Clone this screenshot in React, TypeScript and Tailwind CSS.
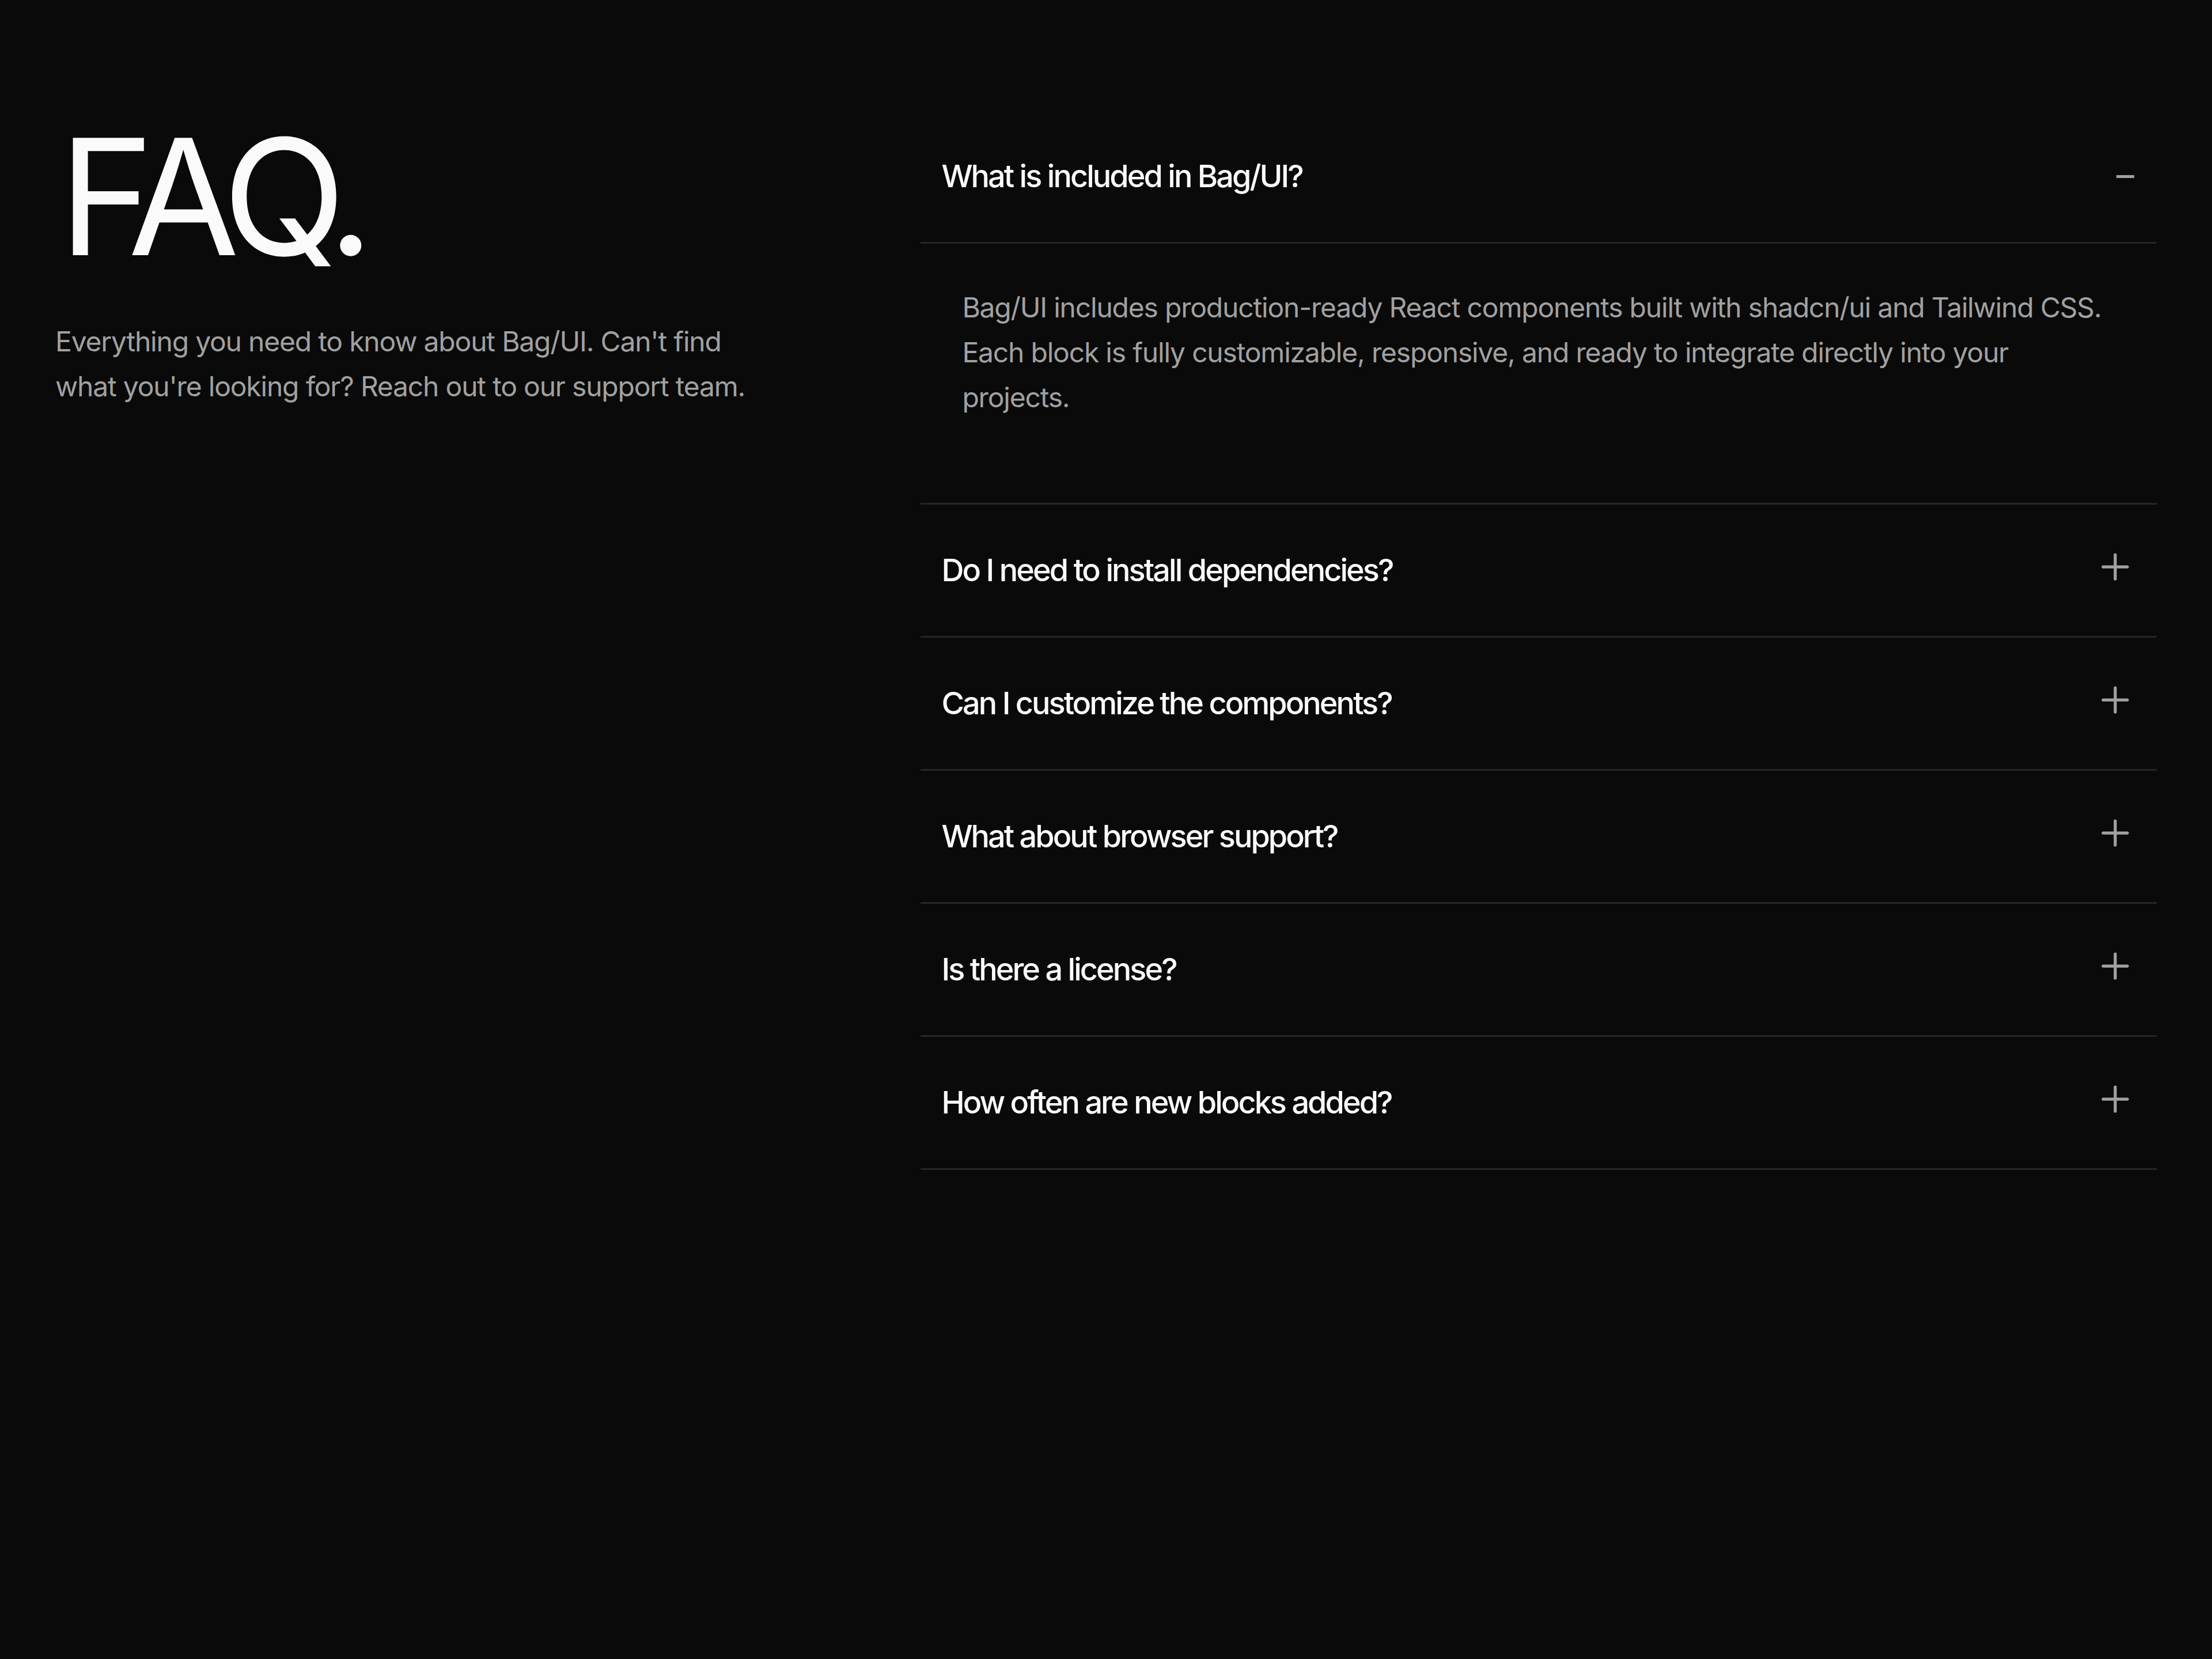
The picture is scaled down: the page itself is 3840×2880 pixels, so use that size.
import { useState } from "react";
import { Plus } from "lucide-react";

const faqs = [
  {
    q: "What is included in Bag/UI?",
    a: "Bag/UI includes production-ready React components built with shadcn/ui and Tailwind CSS. Each block is fully customizable, responsive, and ready to integrate directly into your projects.",
  },
  {
    q: "Do I need to install dependencies?",
    a: "Most blocks only rely on React, Tailwind CSS and a handful of shadcn/ui primitives that you probably already have.",
  },
  {
    q: "Can I customize the components?",
    a: "Yes. Every block is plain source code, so you can change markup, styles and behaviour however you like.",
  },
  {
    q: "What about browser support?",
    a: "Blocks work in all modern evergreen browsers: Chrome, Edge, Firefox and Safari.",
  },
  {
    q: "Is there a license?",
    a: "Bag/UI is released under the MIT license and can be used in personal and commercial projects.",
  },
  {
    q: "How often are new blocks added?",
    a: "New blocks ship regularly, usually every couple of weeks.",
  },
];

export default function App() {
  const [open, setOpen] = useState<number | null>(0);

  return (
    <div className="min-h-screen bg-[#0a0a0a] px-24 py-48 font-['Inter',sans-serif] text-neutral-50">
      <div className="grid grid-cols-[2fr_3fr] gap-18">
        <div>
          <h2 className="mt-[10px] pl-[6px] text-[280px] leading-none font-normal tracking-[-0.07em]">FAQ.</h2>
          <p className="mt-18 max-w-[1250px] text-[48px] leading-[78px] tracking-tight text-neutral-400">
            Everything you need to know about Bag/UI. Can't find what you're looking for? Reach out to our
            support team.
          </p>
        </div>

        <div>
          {faqs.map((item, i) => {
            const isOpen = open === i;
            return (
              <div key={item.q} className="border-b-3 border-[#262626]">
                <button
                  onClick={() => setOpen(isOpen ? null : i)}
                  className={`flex w-full items-center justify-between px-9 py-18 text-left ${
                    isOpen ? "border-b-3 border-[#262626]" : ""
                  }`}
                >
                  <span className="text-[54px] leading-[84px] font-medium tracking-[-0.055em] text-neutral-50">
                    {item.q}
                  </span>
                  {isOpen ? (
                    <span className="flex h-18 w-18 items-center justify-end pr-[3px]">
                      <span className="h-[5px] w-[31px] bg-neutral-400" />
                    </span>
                  ) : (
                    <Plus className="mb-3 h-18 w-18 text-neutral-400" strokeWidth={1.75} />
                  )}
                </button>
                {isOpen && (
                  <div className="px-18 pt-18 pb-36 text-[48px] leading-[78px] tracking-tight text-neutral-400">
                    {item.a}
                  </div>
                )}
              </div>
            );
          })}
        </div>
      </div>
    </div>
  );
}
